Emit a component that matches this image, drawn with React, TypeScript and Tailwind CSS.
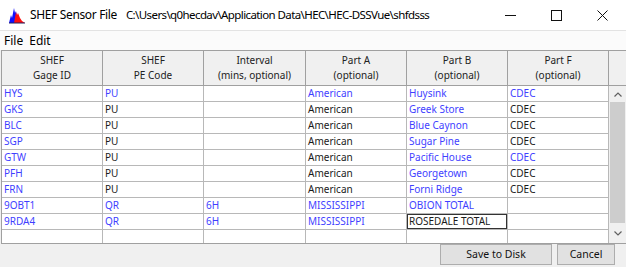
import React from "react";

type Cell = { t: string; b?: boolean; edit?: boolean };

const B = (t: string): Cell => ({ t, b: true });
const K = (t: string): Cell => ({ t });

const rows: Cell[][] = [
  [B("HYS"), B("PU"), K(""), B("American"), B("Huysink"), B("CDEC")],
  [B("GKS"), K("PU"), K(""), K("American"), B("Greek Store"), K("CDEC")],
  [B("BLC"), K("PU"), K(""), K("American"), B("Blue Caynon"), K("CDEC")],
  [B("SGP"), K("PU"), K(""), K("American"), B("Sugar Pine"), K("CDEC")],
  [B("GTW"), K("PU"), K(""), K("American"), B("Pacific House"), B("CDEC")],
  [B("PFH"), K("PU"), K(""), K("American"), B("Georgetown"), K("CDEC")],
  [B("FRN"), K("PU"), K(""), K("American"), B("Forni Ridge"), K("CDEC")],
  [B("9OBT1"), B("QR"), B("6H"), B("MISSISSIPPI"), B("OBION TOTAL"), K("")],
  [B("9RDA4"), B("QR"), B("6H"), B("MISSISSIPPI"), { t: "ROSEDALE TOTAL", edit: true }, K("")],
];

const widths = ["w-[101px]", "w-[101px]", "w-[102px]", "w-[101px]", "w-[101px]", "w-[101px]"];

const headers: [string, string][] = [
  ["SHEF", "Gage ID"],
  ["SHEF", "PE Code"],
  ["Interval", "(mins, optional)"],
  ["Part A", "(optional)"],
  ["Part B", "(optional)"],
  ["Part F", "(optional)"],
];

function AppIcon() {
  return (
    <svg width="18" height="18" viewBox="0 0 18 18">
      <path d="M1 17 L3 9 L4 12 L6 2 L7 7 L8 5 L10 17 Z" fill="#1010ff" />
      <path d="M6 17 L8 6 L9 9 L10 7 L12 12 L14 15 L17 17 Z" fill="#ff1010" />
      <path d="M1 17 H17" stroke="#202060" strokeWidth="1" />
    </svg>
  );
}

export default function App() {
  return (
    <div className="w-[626px] h-[267px] overflow-hidden bg-[#f0f0f0] flex flex-col font-['Noto_Sans',sans-serif] text-[#1a1a1a]">
      {/* Title bar */}
      <div className="h-[31px] shrink-0 bg-white border-b border-[#e3e3e3] flex items-center">
        <div className="ml-[8px] w-[18px] h-[18px]">
          <AppIcon />
        </div>
        <div className="ml-[4px] flex items-baseline whitespace-pre text-black">
          <span className="text-[12px] tracking-[-0.35px]">SHEF Sensor File</span>
          <span className="ml-[9px] text-[11.5px] tracking-[-0.6px]">
            {"C:\\Users\\q0hecdav\\Application Data\\HEC\\HEC-DSSVue\\shfdsss"}
          </span>
        </div>
        <div className="ml-auto flex items-center h-full">
          <div className="w-[46px] h-full flex items-center justify-center">
            <svg width="11" height="11" viewBox="0 0 11 11">
              <path d="M0 5.5 H11" stroke="#111" strokeWidth="1" />
            </svg>
          </div>
          <div className="w-[46px] h-full flex items-center justify-center">
            <svg width="11" height="11" viewBox="0 0 11 11">
              <rect x="0.5" y="0.5" width="10" height="10" fill="none" stroke="#111" strokeWidth="1" />
            </svg>
          </div>
          <div className="w-[46px] h-full flex items-center justify-center mr-[1px]">
            <svg width="11" height="11" viewBox="0 0 11 11">
              <path d="M0.5 0.5 L10.5 10.5 M10.5 0.5 L0.5 10.5" stroke="#111" strokeWidth="1" />
            </svg>
          </div>
        </div>
      </div>

      {/* Menu bar */}
      <div className="h-[19px] shrink-0 bg-[#fbfbfb] flex items-center text-[12px] text-black">
        <span className="ml-[4px]">File</span>
        <span className="ml-[6px]">Edit</span>
      </div>

      {/* Table area */}
      <div className="h-[194px] shrink-0 ml-[1px] border-l border-t border-b border-[#a0a0a0] flex bg-white">
        <div className="w-[607px] flex flex-col text-[10px]">
          <div className="flex">
            {headers.map((h, i) => (
              <div
                key={i}
                className={`${widths[i]} h-[35px] border-r border-b border-[#a0a0a0] bg-[#f0f0f0] flex flex-col items-center justify-center leading-[15px] text-[#222]`}
              >
                <span>{h[0]}</span>
                <span>{h[1]}</span>
              </div>
            ))}
          </div>
          {rows.map((r, ri) => (
            <div key={ri} className="flex">
              {r.map((c, ci) => (
                <div
                  key={ci}
                  className={`${widths[ci]} relative h-[16px] border-r border-b border-[#b8b8b8] pl-[2px] leading-[15px] whitespace-nowrap overflow-hidden ${
                    c.b ? "text-[#3f3fff]" : "text-[#1a1a1a]"
                  }`}
                >
                  {c.t}
                  {c.edit && (
                    <span className="absolute left-0 top-0 right-0 bottom-0 border border-[#333]" />
                  )}
                </div>
              ))}
            </div>
          ))}
          <div className="flex">
            {widths.map((w, i) => (
              <div key={i} className={`${w} h-[13px] border-r border-[#b8b8b8]`} />
            ))}
          </div>
        </div>

        {/* Scrollbar column */}
        <div className="w-[17px] flex flex-col">
          <div className="h-[35px] bg-[#f0f0f0] border-b border-[#a0a0a0]" />
          <div className="flex-1 bg-[#f0f0f0] flex flex-col">
            <div className="h-[16px] flex items-center justify-center">
              <svg width="8" height="5" viewBox="0 0 8 5">
                <path d="M0.5 4.5 L4 1 L7.5 4.5" fill="none" stroke="#606060" strokeWidth="1.2" />
              </svg>
            </div>
            <div className="mx-[1px] h-[121px] bg-[#cdcdcd]" />
            <div className="flex-1 flex items-center justify-center">
              <svg width="8" height="5" viewBox="0 0 8 5">
                <path d="M0.5 0.5 L4 4 L7.5 0.5" fill="none" stroke="#606060" strokeWidth="1.2" />
              </svg>
            </div>
          </div>
        </div>
      </div>

      {/* Footer */}
      <div className="flex-1 flex justify-end items-start pr-[11px] gap-[5px] text-[10.5px] text-[#111]">
        <button className="w-[112px] h-[21px] bg-[#e1e1e1] border border-[#adadad] flex items-center justify-center">
          Save to Disk
        </button>
        <button className="w-[58px] h-[21px] bg-[#e1e1e1] border border-[#adadad] flex items-center justify-center">
          Cancel
        </button>
      </div>
    </div>
  );
}
